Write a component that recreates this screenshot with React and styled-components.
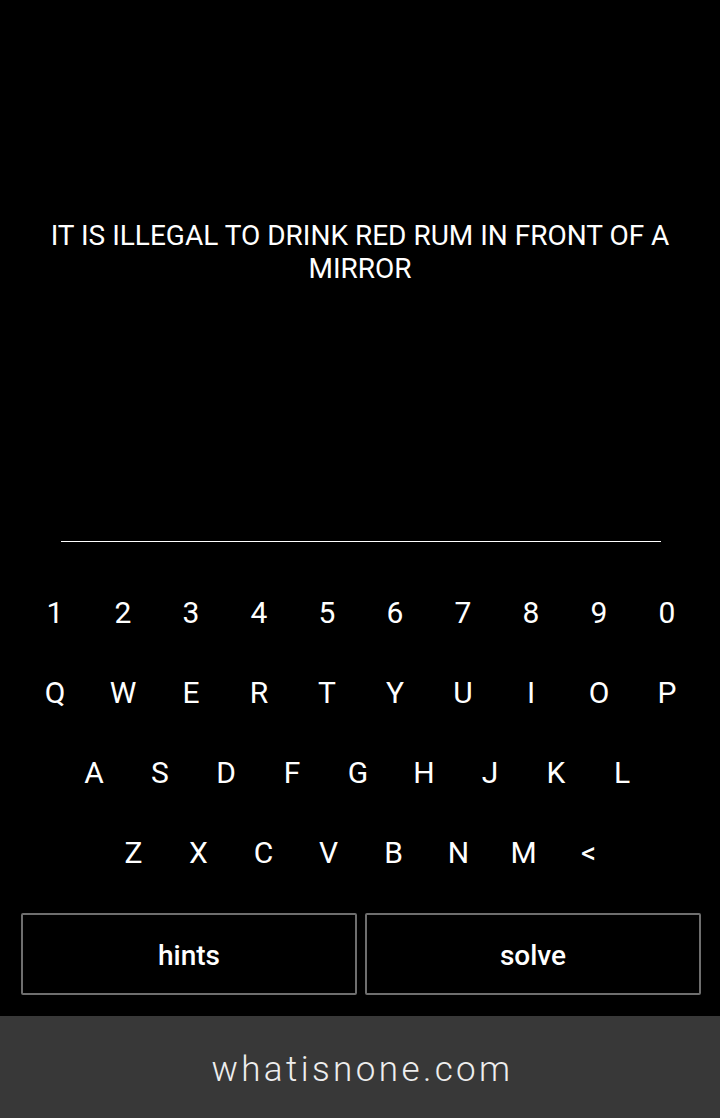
import React from 'react';
import styled, { createGlobalStyle } from 'styled-components';

const GlobalStyle = createGlobalStyle`
  html, body {
    margin: 0;
    padding: 0;
    background: #000;
  }
  body {
    font-family: Roboto, "Liberation Sans", sans-serif;
    color: #fff;
  }
`;

const Page = styled.div`
  width: 720px;
  height: 1118px;
  display: flex;
  flex-direction: column;
  background: #000;
  overflow: hidden;
`;

const Question = styled.div`
  height: 541px;
  box-sizing: border-box;
  padding: 219px 40px 0;
  text-align: center;
  font-size: 28px;
  line-height: 33px;
  text-transform: uppercase;
`;

const Divider = styled.div`
  height: 1px;
  margin: 0 59px 0 61px;
  background: #fff;
`;

const Keyboard = styled.div`
  margin-top: 30px;
  padding: 0 19px 0 21px;
  display: flex;
  flex-direction: column;
`;

const KeyRow = styled.div`
  height: 80px;
  display: flex;
  justify-content: center;
  margin-left: ${p => p.$shift || 0}px;
`;

const Key = styled.div`
  width: ${p => p.$w}px;
  display: flex;
  align-items: center;
  justify-content: center;
  font-size: 30px;
  cursor: pointer;
`;

const Actions = styled.div`
  margin-top: 21px;
  padding: 0 19px 0 21px;
  display: grid;
  grid-template-columns: 1fr 1fr;
  gap: 8px;
`;

const ActionButton = styled.button`
  height: 82px;
  background: #000;
  border: 2px solid #6e6e6e;
  border-radius: 2px;
  color: #fff;
  font-family: Roboto, "Liberation Sans", sans-serif;
  font-size: 28px;
  font-weight: 500;
  padding-top: 4px;
  cursor: pointer;
`;

const Footer = styled.footer`
  margin-top: auto;
  height: 102px;
  box-sizing: border-box;
  padding: 4px 0 0 5px;
  background: #383838;
  display: flex;
  align-items: center;
  justify-content: center;
  font-size: 35px;
  font-weight: 300;
  letter-spacing: 3.4px;
  color: #eee;
`;

const rows = [
  { keys: '1234567890'.split(''), w: 68 },
  { keys: 'QWERTYUIOP'.split(''), w: 68 },
  { keys: 'ASDFGHJKL'.split(''), w: 66, shift: -6 },
  { keys: 'ZXCVBNM<'.split(''), w: 65 },
];

export default function App() {
  return (
    <Page>
      <GlobalStyle />
      <Question>It is illegal to drink red rum in front of a mirror</Question>
      <Divider />
      <Keyboard>
        {rows.map((row, i) => (
          <KeyRow key={i} $shift={row.shift}>
            {row.keys.map(k => (
              <Key key={k} $w={row.w}>{k}</Key>
            ))}
          </KeyRow>
        ))}
      </Keyboard>
      <Actions>
        <ActionButton>hints</ActionButton>
        <ActionButton>solve</ActionButton>
      </Actions>
      <Footer>whatisnone.com</Footer>
    </Page>
  );
}
